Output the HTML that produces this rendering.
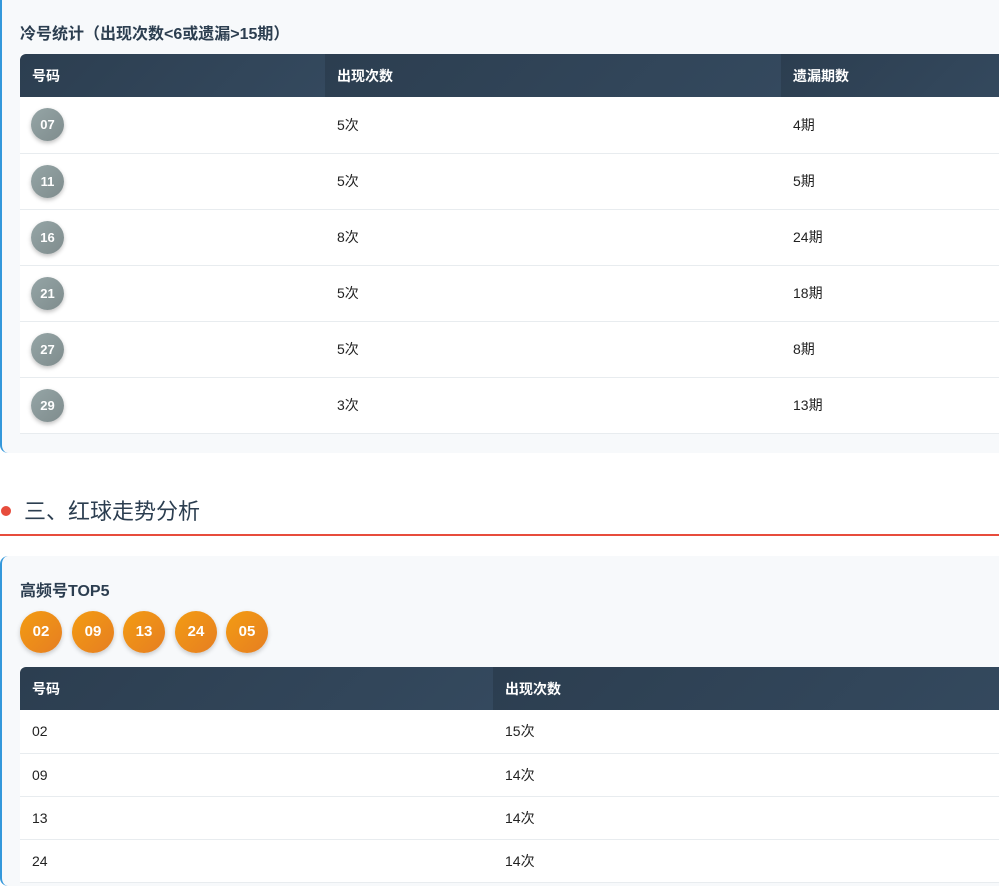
<!DOCTYPE html>
<html><head><meta charset="utf-8"><style>
*{margin:0;padding:0;box-sizing:border-box}
body{width:999px;height:871px;overflow:hidden;background:#fff;font-family:"Liberation Sans","Noto Sans CJK SC",sans-serif;color:#222;position:relative}
.card{position:absolute;left:0;width:1010px;background:#f7f9fb;border-left:2px solid #3498db;border-radius:8px}
.title{position:absolute;left:20px;font-size:16px;font-weight:bold;color:#2c3e50}
table{position:absolute;left:20px;border-collapse:collapse;background:#fff;width:990px}
th{background:linear-gradient(135deg,#2c3e50,#34495e);color:#fff;font-size:14px;font-weight:bold;text-align:left;padding:0 12px;height:43px}
thead tr th:first-child{border-top-left-radius:6px}
td{font-size:14px;padding:0 12px;border-bottom:1px solid #e8ecef}
.t1 td{height:56px}
.t2 td{height:43px}
.g{display:inline-block;width:33px;height:33px;border-radius:50%;background:linear-gradient(135deg,#95a5a6,#7f8c8d);color:#fff;font-weight:bold;font-size:13px;text-align:center;line-height:33px;box-shadow:0 2px 4px rgba(0,0,0,.25);vertical-align:middle;margin-left:-1px}
.o{position:absolute;top:611px;width:42px;height:42px;border-radius:50%;background:linear-gradient(135deg,#f39c12,#e67e22);color:#fff;font-weight:bold;font-size:15px;text-align:center;line-height:42px;box-shadow:0 2px 5px rgba(0,0,0,.2)}
</style></head><body>
<div class="card" style="top:-8px;height:461px"></div>
<div class="title" style="top:20px">冷号统计（出现次数&lt;6或遗漏&gt;15期）</div>
<table class="t1" style="top:54px">
<colgroup><col style="width:305px"><col style="width:456px"><col></colgroup>
<thead><tr><th>号码</th><th>出现次数</th><th>遗漏期数</th></tr></thead>
<tbody>
<tr><td><span class="g">07</span></td><td>5次</td><td>4期</td></tr>
<tr><td><span class="g">11</span></td><td>5次</td><td>5期</td></tr>
<tr><td><span class="g">16</span></td><td>8次</td><td>24期</td></tr>
<tr><td><span class="g">21</span></td><td>5次</td><td>18期</td></tr>
<tr><td><span class="g">27</span></td><td>5次</td><td>8期</td></tr>
<tr><td><span class="g">29</span></td><td>3次</td><td>13期</td></tr>
</tbody></table>
<div style="position:absolute;left:1px;top:506px;width:10px;height:10px;border-radius:50%;background:#e74c3c"></div>
<div style="position:absolute;left:24px;top:494px;font-size:22px;color:#2c3e50">三、红球走势分析</div>
<div style="position:absolute;left:0;top:534px;width:999px;height:2px;background:#e74c3c"></div>
<div class="card" style="top:556px;height:330px"></div>
<div class="title" style="top:577px">高频号TOP5</div>
<div class="o" style="left:20px">02</div>
<div class="o" style="left:72px">09</div>
<div class="o" style="left:123px">13</div>
<div class="o" style="left:175px">24</div>
<div class="o" style="left:226px">05</div>
<table class="t2" style="top:667px">
<colgroup><col style="width:473px"><col></colgroup>
<thead><tr><th>号码</th><th>出现次数</th></tr></thead>
<tbody>
<tr><td>02</td><td>15次</td></tr>
<tr><td>09</td><td>14次</td></tr>
<tr><td>13</td><td>14次</td></tr>
<tr><td>24</td><td>14次</td></tr>
</tbody></table>
</body></html>
